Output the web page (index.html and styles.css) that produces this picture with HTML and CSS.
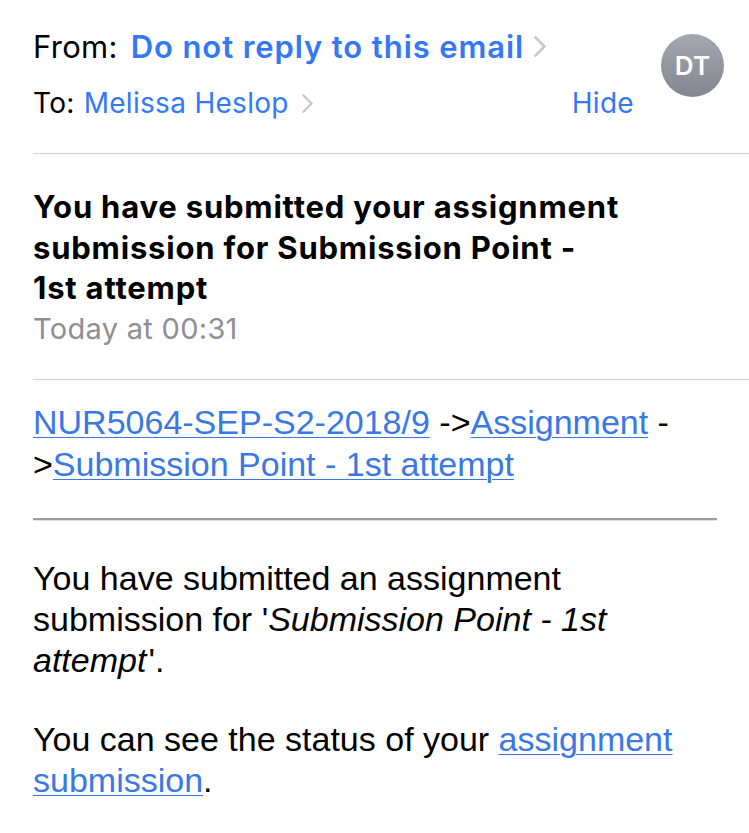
FILE: index.html
```html
<!DOCTYPE html>
<html lang="en">
<head>
<meta charset="utf-8">
<title>Mail</title>
<link rel="stylesheet" href="styles.css">
</head>
<body>
<div class="mail">
  <header class="header">
    <div class="addr">
      <div class="from-row">
        <span class="label">From:</span>
        <span class="sender">Do not reply to this email</span>
        <svg class="chev chev-lg" viewBox="0 0 14 23" aria-hidden="true"><path d="M2.5 2.5l9 9-9 9" fill="none" stroke="currentColor" stroke-width="2.6" stroke-linecap="round" stroke-linejoin="round"/></svg>
      </div>
      <div class="to-row">
        <span class="label">To:</span>
        <span class="recipient">Melissa Heslop</span>
        <svg class="chev chev-sm" viewBox="0 0 14 23" aria-hidden="true"><path d="M2.5 2.5l9 9-9 9" fill="none" stroke="currentColor" stroke-width="2.6" stroke-linecap="round" stroke-linejoin="round"/></svg>
        <span class="hide">Hide</span>
      </div>
    </div>
    <div class="avatar">DT</div>
  </header>
  <div class="sep sep-top"></div>
  <section class="subject-block">
    <h1 class="subject">You have submitted your assignment submission for Submission Point - 1st&nbsp;attempt</h1>
    <div class="date">Today at 00:31</div>
  </section>
  <div class="sep"></div>
  <article class="content">
    <div class="crumbs"><a href="#">NUR5064-SEP-S2-2018/9</a> -&gt;<a href="#">Assignment</a> -<wbr>&gt;<a href="#">Submission Point - 1st attempt</a></div>
    <hr class="rule">
    <p>You have submitted an assignment submission for '<em>Submission Point - 1st attempt</em>'.</p>
    <p>You can see the status of your <a href="#">assignment submission</a>.</p>
  </article>
</div>
</body>
</html>
```
FILE: styles.css
```css
html, body {
  margin: 0;
  padding: 0;
  background: #ffffff;
}

.mail {
  width: 749px;
  overflow: hidden;
}

.header {
  display: flex;
  align-items: flex-start;
  padding: 0 25px 0 33px;
  font-family: "Inter", "Noto Sans", sans-serif;
  color: #000;
}

.addr {
  flex: 1;
  padding-top: 26px;
}

.from-row {
  display: flex;
  align-items: center;
  height: 40px;
  font-size: 31px;
  white-space: nowrap;
}

.label {
  margin-right: 13px;
  letter-spacing: 0.3px;
}

.sender {
  color: #3478f6;
  font-weight: 600;
  letter-spacing: 0.9px;
}

.chev {
  color: #c7c7cc;
  flex: none;
}

.chev-lg {
  width: 14px;
  height: 23px;
  margin-left: 9px;
}

.chev-sm {
  width: 13px;
  height: 21px;
  margin-left: 12px;
}

.to-row {
  display: flex;
  align-items: center;
  height: 40px;
  margin-top: 17px;
  font-size: 28px;
  white-space: nowrap;
}

.to-row .label {
  margin-right: 9px;
}

.recipient {
  color: #3478f6;
  letter-spacing: 0.3px;
}

.hide {
  margin-left: auto;
  color: #3478f6;
  letter-spacing: 0.3px;
}

.avatar {
  flex: none;
  width: 63px;
  height: 63px;
  margin-top: 34px;
  margin-left: 27px;
  border-radius: 50%;
  background: linear-gradient(180deg, #a6a8b0 0%, #83868f 100%);
  color: #fff;
  font-family: "Inter", "Noto Sans", sans-serif;
  font-size: 26px;
  font-weight: 600;
  display: flex;
  align-items: center;
  justify-content: center;
  letter-spacing: 0.3px;
}

.sep {
  height: 1px;
  background: #d1d1d6;
  margin-left: 33px;
}

.sep-top {
  margin-top: 30px;
}

.subject-block {
  padding: 33px 60px 30.5px 33px;
  font-family: "Inter", "Noto Sans", sans-serif;
}

.subject {
  margin: 0;
  font-size: 31px;
  line-height: 40.5px;
  font-weight: 700;
  color: #000;
  letter-spacing: 0.8px;
}

.date {
  font-size: 29px;
  line-height: 40px;
  color: #8e8e93;
  letter-spacing: 0.3px;
}

.content {
  padding: 21px 32px 0 33px;
  font-family: "Liberation Sans", Arial, sans-serif;
  font-size: 34px;
  line-height: 42px;
  color: #000;
}

.content a {
  color: #3a78e4;
  text-decoration: underline;
  text-decoration-thickness: 1px;
  text-underline-offset: 3px;
}

.crumbs {
  margin: 0;
}

.rule {
  margin: 33px 0 36.5px 0;
  height: 0;
  border: none;
  border-top: 2px solid #9d9d9d;
  border-bottom: 1px solid #e2e2e2;
}

.content p {
  margin: 0 0 38px 0;
  line-height: 41px;
}

.content em {
  font-style: italic;
  padding-right: 2px;
}
```
